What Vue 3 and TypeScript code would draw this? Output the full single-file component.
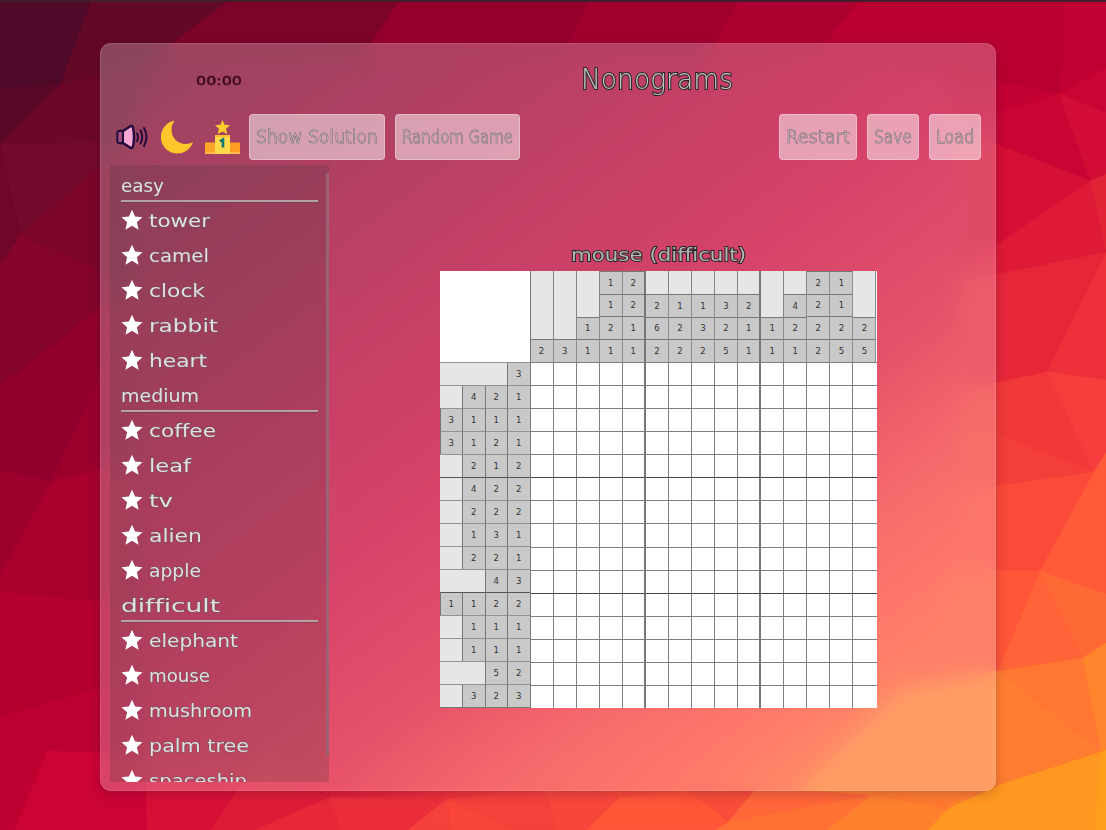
<script setup lang="ts">
import { h, type FunctionalComponent } from 'vue'

interface LabelProps { text: string; w: number; size: number }

// Text set to an exact advance width, vertically centred in its line box.
const Label: FunctionalComponent<LabelProps> = (p) => {
  const height = Math.round(p.size * 1.3)
  return h('svg', { width: p.w, height, class: 'label' }, [
    h('text', { x: 0, y: p.size, 'font-size': p.size, textLength: p.w, lengthAdjust: 'spacingAndGlyphs' }, p.text),
  ])
}
Label.props = ['text', 'w', 'size']

const levels = [
  { name: 'easy', w: 43, games: [['tower', 61], ['camel', 60], ['clock', 56], ['rabbit', 69], ['heart', 58]] },
  { name: 'medium', w: 78, games: [['coffee', 67], ['leaf', 42], ['tv', 24], ['alien', 53], ['apple', 52]] },
  { name: 'difficult', w: 99, games: [['elephant', 89], ['mouse', 61], ['mushroom', 103], ['palm tree', 100], ['spaceship', 98]] },
] as { name: string; w: number; games: [string, number][] }[]

const colClues = [[2], [3], [1, 1], [1, 1, 2, 1], [2, 2, 1, 1], [2, 6, 2], [1, 2, 2], [1, 3, 2], [3, 2, 5], [2, 1, 1], [1, 1], [4, 2, 1], [2, 2, 2, 2], [1, 1, 2, 5], [2, 5]]
const rowClues = [[3], [4, 2, 1], [3, 1, 1, 1], [3, 1, 2, 1], [2, 1, 2], [4, 2, 2], [2, 2, 2], [1, 3, 1], [2, 2, 1], [4, 3], [1, 1, 2, 2], [1, 1, 1], [1, 1, 1], [5, 2], [3, 2, 3]]

const facets: [string, string][] = [
  ['0,0 92,0 60,85 0,88', '#4f0a2a'],
  ['92,0 230,0 150,60 60,85', '#640828'],
  ['0,88 60,85 0,144', '#5c0828'],
  ['60,85 150,60 130,141 0,144', '#6b0829'],
  ['0,144 130,141 20,235', '#740a2b'],
  ['0,144 20,235 0,265', '#70062a'],
  ['130,141 130,285 20,235', '#7c052a'],
  ['20,235 130,285 0,385 0,265', '#84042b'],
  ['130,285 130,310 52,481 0,471 0,385', '#91002c'],
  ['130,310 140,460 52,481', '#9b002d'],
  ['0,471 52,481 0,575', '#9c002d'],
  ['52,481 140,460 140,606 0,592 0,575', '#a9002e'],
  ['0,592 140,606 140,677 0,717', '#b40030'],
  ['0,717 140,677 140,753 47,751 0,762', '#bc0031'],
  ['0,762 47,751 15,830 0,830', '#be0031'],
  ['47,751 145,753 147,830 15,830', '#cb0433'],
  ['145,753 260,755 211,830 147,830', '#d70f36'],
  ['260,755 330,797 255,830 211,830', '#de1b37'],
  ['330,797 341,830 255,830', '#e62839'],
  ['330,797 447,799 408,830 341,830', '#ec2e3a'],
  ['447,799 452,830 408,830', '#f5403b'],
  ['447,799 515,830 452,830', '#fa453b'],
  ['447,799 545,790 558,830 515,830', '#f5403b'],
  ['545,790 620,797 587,830 558,830', '#f8463b'],
  ['620,797 675,797 728,822 716,830 587,830', '#ff5638'],
  ['675,780 755,790 728,822', '#f94d39'],
  ['755,790 872,780 872,795 728,822', '#ff6638'],
  ['728,822 872,795 827,830 716,830', '#ff7034'],
  ['872,795 948,809 928,830 827,830', '#ff812e'],
  ['872,795 884,780 960,790 948,809', '#ff792f'],
  ['230,0 400,0 360,60 150,60', '#7d0429'],
  ['400,0 590,0 560,60 360,60', '#96002d'],
  ['590,0 740,0 700,70 560,60', '#a1002f'],
  ['740,0 860,0 820,50 700,70', '#ae0030'],
  ['860,0 1067,0 1059,94 820,50', '#b90030'],
  ['1067,0 1106,0 1106,68 1059,94', '#c00032'],
  ['1059,94 960,122 940,70', '#c20032'],
  ['1059,94 1091,181 960,130 960,122', '#c90534'],
  ['1059,94 1106,68 1106,113', '#ca0534'],
  ['1059,94 1106,113 1106,174 1091,181', '#d30d36'],
  ['960,130 1091,181 960,270', '#d50f35'],
  ['960,270 1091,181 1106,252 960,282', '#df1a37'],
  ['1091,181 1106,174 1106,252', '#e22437'],
  ['960,282 1106,252 1047,372 960,390', '#e7263a'],
  ['1106,252 1106,380 1047,372', '#ee303a'],
  ['1047,372 1106,380 1106,453 1094,472', '#f63f3c'],
  ['960,390 1047,372 1094,472 960,420', '#f23939'],
  ['960,420 1094,472 960,491', '#f43e39'],
  ['960,491 1094,472 1040,571 960,569', '#fb493a'],
  ['1094,472 1106,453 1106,594 1040,571', '#ff5b38'],
  ['960,569 1040,571 998,671 900,680', '#ff5538'],
  ['1040,571 1083,658 998,671', '#ff6337'],
  ['1040,571 1106,594 1106,643 1083,658', '#ff6936'],
  ['998,671 1083,658 1101,752', '#ff7733'],
  ['998,671 1101,752 960,800 800,790 900,690', '#ff7d30'],
  ['1083,658 1106,643 1106,750 1101,752', '#ff842c'],
  ['1101,752 1095,830 928,830 948,809 1000,785', '#ff9820'],
  ['1101,752 1106,750 1106,830 1095,830', '#ff9d1c'],
]

const blankCols = (n: number) => 4 - n
</script>

<template>
  <div class="page">
    <svg class="backdrop" width="1106" height="830" viewBox="0 0 1106 830">
      <defs>
        <linearGradient id="glow" x1="0" y1="0" x2="1" y2="1">
          <stop offset="0" stop-color="#4a0a2b" />
          <stop offset=".13" stop-color="#7c042b" />
          <stop offset=".26" stop-color="#99002f" />
          <stop offset=".38" stop-color="#b40033" />
          <stop offset=".5" stop-color="#ca0538" />
          <stop offset=".61" stop-color="#dd1738" />
          <stop offset=".7" stop-color="#f2383b" />
          <stop offset=".79" stop-color="#ff5038" />
          <stop offset=".88" stop-color="#ff7430" />
          <stop offset="1" stop-color="#ff9f1c" />
        </linearGradient>
      </defs>
      <rect width="1106" height="830" fill="url(#glow)" />
      <polygon v-for="(f, i) in facets" :key="i" :points="f[0]" :fill="f[1]" :stroke="f[1]" stroke-width=".5" />
      <rect width="1106" height="2" fill="#421d2b" />
    </svg>

    <main class="panel">
      <header class="head">
        <div class="clock"><Label class="timer" text="00:00" :w="46" :size="12" /></div>
        <h1 class="title"><Label class="outlined" text="Nonograms" :w="152" :size="28" /></h1>
      </header>

      <nav class="toolbar">
        <svg class="icon speaker" width="34" height="28" viewBox="0 0 34 28">
          <path d="M2.5 10.5Q2.5 8 5 8H8L15 3.5Q17 2 18 4.5Q20 14 18 23.5Q17 26 15 24.5L8 20H5Q2.5 20 2.5 17.500Z" fill="#f9a8d4" stroke="#220b3f" stroke-width="2.4" stroke-linejoin="round" />
          <path d="M3.500 9H8V19H3.500Z" fill="#a34d7a" />
          <path d="M8 8V20" stroke="#220b3f" stroke-width="2" />
          <path d="M22 10.500Q24 14 22 18M25.500 7.500Q29 14 25.500 20.500M29 5Q34 14 29 23" fill="none" stroke="#220b3f" stroke-width="2" stroke-linecap="round" />
        </svg>
        <svg class="icon moon" width="33" height="34" viewBox="0 0 33 34">
          <path d="M13 .8A16.500 16.500 0 1 0 32 22Q29 24 25 24C16 24 10.500 17.500 10.500 9.500Q10.500 4.500 13.400 1.400Z" fill="#ffc72c" />
        </svg>
        <svg class="icon podium" width="35" height="36" viewBox="0 0 35 36">
          <path d="M0 23.500H12V35H0Z" fill="#ffa526" />
          <path d="M23 23.500H35V35H23Z" fill="#ff9d22" />
          <path d="M0 33H35V35H0Z" fill="#ffb84c" />
          <path d="M10 16H25V35H10Z" fill="#ffd84b" />
          <path d="M10 16H25V18H10Z" fill="#ffbe2e" />
          <path d="M17.500 1L19.600 5.700L25 6.300L21 9.800L22.200 15L17.500 12.400L12.800 15L14 9.800L10 6.300L15.400 5.700Z" fill="#ffcb2f" />
          <path d="M15 22.300L18 20.500V28.500" fill="none" stroke="#087a70" stroke-width="2.600" />
        </svg>
        <button class="btn"><Label text="Show Solution" :w="122" :size="17" /></button>
        <button class="btn"><Label text="Random Game" :w="111" :size="17" /></button>
        <span class="spacer"></span>
        <button class="btn"><Label text="Restart" :w="64" :size="17" /></button>
        <button class="btn"><Label text="Save" :w="38" :size="17" /></button>
        <button class="btn"><Label text="Load" :w="38" :size="17" /></button>
      </nav>

      <div class="content">
        <aside class="sidebar">
          <template v-for="level in levels" :key="level.name">
            <div class="level"><Label :text="level.name" :w="level.w" :size="18" /></div>
            <div v-for="g in level.games" :key="g[0]" class="game">
              <svg width="22" height="22" viewBox="0 0 22 22"><path d="M11 .8L14.100 7.600L21.500 8.300L15.900 13.200L17.600 20.700L11 16.800L4.400 20.700L6.100 13.200L.5 8.300L7.900 7.600Z" fill="#fff" /></svg>
              <Label :text="g[0]" :w="g[1]" :size="18" />
            </div>
          </template>
          <span class="scrollbar"></span>
        </aside>

        <section class="game-area">
          <h2 class="subtitle"><Label class="outlined" text="mouse (difficult)" :w="175" :size="18" /></h2>
          <div class="puzzle">
            <div class="corner"></div>
            <div class="col-clues">
              <div v-for="(c, i) in colClues" :key="i" class="col" :class="{ fifth: i % 5 === 4 && i < 14 }">
                <div v-if="c.length < 4" class="blank"></div>
                <div v-for="(n, j) in c" :key="j" class="clue">{{ n }}</div>
              </div>
            </div>
            <div class="row-clues">
              <div v-for="(r, i) in rowClues" :key="i" class="row" :class="{ sixth: i % 5 === 0 && i > 0 }">
                <div v-if="r.length < 4" class="blank" :class="'span' + blankCols(r.length)"></div>
                <div v-for="(n, j) in r" :key="j" class="clue">{{ n }}</div>
              </div>
            </div>
            <div class="board">
              <template v-for="r in 15" :key="r">
                <div v-for="c in 15" :key="c" class="cell" :class="{ right: c % 5 === 0 && c < 15, top: r % 5 === 1 && r > 1, last: c === 15 }"></div>
              </template>
            </div>
          </div>
        </section>
      </div>
    </main>
  </div>
</template>

<style>
body { margin: 0; overflow: hidden; }
</style>

<style scoped>
* { box-sizing: border-box; }
.page { width: 1106px; height: 830px; position: relative; overflow: hidden; padding: 43px 110px 39px 100px; font-family: "DejaVu Sans", "Open Sans", sans-serif; }
.backdrop { position: absolute; inset: 0; }
.panel { position: relative; width: 896px; height: 748px; padding: 0 9px 8px; border: 1px solid rgba(255, 255, 255, .1); border-radius: 11px; background: rgba(255, 255, 255, .25); backdrop-filter: blur(10px); box-shadow: 0 3px 12px rgba(40, 10, 50, .22); }
.label { display: block; overflow: visible; flex: none; fill: #e2dfe0; stroke: #6d555f; stroke-width: .9px; paint-order: stroke; font-family: "DejaVu Sans", sans-serif; font-weight: 400; font-variant-ligatures: none; }
.head { height: 70px; display: flex; align-items: center; }
.clock { width: 218px; display: flex; justify-content: center; padding-top: 4px; }
.timer { fill: #37081f; stroke: #37081f; stroke-width: .4px; }
.title, .subtitle { margin: 0; display: flex; justify-content: center; }
.title { flex: 1; }
.outlined { fill: #b4b6b4; stroke: #29262a; stroke-width: 1.8px; }
.title .label { font-weight: 200; fill: #c4c6c4; stroke-width: 2.2px; }
.toolbar { height: 46px; display: flex; align-items: center; padding: 0 5px 0 5px; }
.icon { flex: none; }
.speaker { margin-right: 12px; }
.moon { margin-right: 11px; }
.podium { margin-right: 9px; }
.btn { height: 46px; padding: 0 6px; margin: 0 10px 0 0; display: flex; align-items: center; border: 1px solid rgba(255, 255, 255, .3); border-radius: 4px; background: rgba(255, 255, 255, .5); }
.btn:last-child { margin-right: 0; }
.btn .label { font-weight: 200; fill: #cbb4bd; stroke: #6a656b; stroke-width: .9px; }
.spacer { flex: 1; }
.content { height: 617px; margin-top: 5px; display: flex; }
.sidebar { position: relative; width: 219px; overflow: hidden; padding: 2px 11px 0; background: rgba(70, 55, 60, .22); }
.level { height: 35px; padding-top: 4px; border-bottom: 2px solid #b3a3a8; box-shadow: 0 1px 0 rgba(90, 50, 65, .4); display: flex; align-items: center; }
.game { height: 35px; display: flex; align-items: center; gap: 6px; padding-top: 1px; }
.scrollbar { position: absolute; right: 0; top: 8px; width: 3px; height: 583px; background: #9a6275; }
.game-area { flex: 1; display: flex; flex-direction: column; align-items: center; padding: 75px 0 0 1px; }
.subtitle { height: 28px; align-items: center; margin-bottom: 3px; }
.puzzle { display: grid; grid-template-columns: 90px 347px; grid-template-rows: 91px 346px; width: 437px; background: #fff; color: #333; font-size: 8.5px; line-height: 1; }
.corner { background: #fff; }
.col-clues { display: flex; border-left: 1px solid #777; }
.col { flex: 1; min-width: 0; display: flex; flex-direction: column; }
.col .blank { flex: 1; background: #e6e6e6; border-right: 1px solid #858585; }
.col .clue { height: 22.7px; border-top: 1px solid #777; border-right: 1px solid #8e8e8e; }
.clue { background: #c9c9c9; display: flex; align-items: center; justify-content: center; }
.col.fifth > div { border-right: 2px solid #777; }
.row-clues { display: flex; flex-direction: column; border-bottom: 1px solid #777; }
.row { flex: 1; min-height: 0; display: flex; }
.row > div { border-top: 1px solid #929292; }
.row .clue { width: 22.500px; border-left: 1px solid #777; }
.row .blank { background: #e6e6e6; }
.span1 { width: 22.500px; }
.span2 { width: 45px; }
.span3 { width: 67.500px; }
.row.sixth > div { border-top-color: #555; }
.board { display: grid; grid-template-columns: repeat(15, 1fr); grid-template-rows: repeat(15, 1fr); background: #fff; border-left: 1px solid #777; }
.cell { border-right: 1px solid #808080; border-top: 1px solid #808080; }
.cell.right { border-right: 2px solid #777; }
.cell.top { border-top: 1px solid #444; }
.cell.last { border-right: 0; }
</style>
